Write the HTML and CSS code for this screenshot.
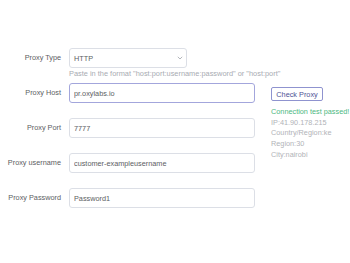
FILE: index.html
```html
<!DOCTYPE html>
<html lang="en">
<head>
    <meta charset="UTF-8">
    <meta name="viewport" content="width=device-width, initial-scale=1.0">
    <title>Proxy Settings</title>
    <link rel="stylesheet" href="styles.css">
</head>
<body>

<div class="page">
    <div class="proxy-form">
        <div class="form-item has-hint">
            <label class="form-label">Proxy Type</label>
            <div class="form-control">
                <div class="select-box">
                    <span>HTTP</span>
                    <svg class="select-arrow" width="6" height="4" viewBox="0 0 6 4">
                        <path d="M0.8 0.8 L3 3 L5.2 0.8" fill="none" stroke="#a0a3aa" stroke-width="0.8"/>
                    </svg>
                </div>
                <div class="form-hint">Paste in the format "host:port:username:password" or "host:port"</div>
            </div>
        </div>

        <div class="form-item">
            <label class="form-label">Proxy Host</label>
            <div class="form-control">
                <input type="text" class="text-input focused" value="pr.oxylabs.io">
            </div>
        </div>

        <div class="form-item">
            <label class="form-label">Proxy Port</label>
            <div class="form-control">
                <input type="text" class="text-input" value="7777">
            </div>
        </div>

        <div class="form-item">
            <label class="form-label">Proxy username</label>
            <div class="form-control">
                <input type="text" class="text-input" value="customer-exampleusername">
            </div>
        </div>

        <div class="form-item">
            <label class="form-label">Proxy Password</label>
            <div class="form-control">
                <input type="text" class="text-input" value="Password1">
            </div>
        </div>
    </div>

    <div class="check-panel">
        <button class="check-btn">Check Proxy</button>
        <div class="check-result">
            <div class="result-ok">Connection test passed!</div>
            <div>IP:41.90.178.215</div>
            <div>Country/Region:ke</div>
            <div>Region:30</div>
            <div>City:nairobi</div>
        </div>
    </div>
</div>

</body>
</html>
```

FILE: styles.css
```css
body {
    margin: 0;
    background-color: #fff;
    font-family: "Liberation Sans", Arial, sans-serif;
    color: #606266;
}

.page {
    display: flex;
    padding-top: 48px;
}

.proxy-form {
    width: 255px;
}

.form-item {
    display: flex;
    margin-bottom: 15px;
}

.form-item.has-hint {
    margin-bottom: 3px;
}

.form-label {
    width: 61px;
    flex-shrink: 0;
    padding-right: 8px;
    text-align: right;
    font-size: 7.3px;
    line-height: 20px;
    color: #5c5e63;
}

.form-control {
    flex: 1;
}

.select-box {
    width: 118px;
    height: 20px;
    box-sizing: border-box;
    border: 1px solid #dcdfe6;
    border-radius: 3px;
    padding: 0 3px 0 4px;
    display: flex;
    align-items: center;
    justify-content: space-between;
    font-size: 7.3px;
    color: #5c5e63;
}

.form-hint {
    font-size: 7.4px;
    line-height: 12px;
    color: #a8abb2;
    white-space: nowrap;
}

.text-input {
    display: block;
    width: 100%;
    height: 20px;
    box-sizing: border-box;
    margin: 0;
    padding: 0 4px;
    border: 1px solid #dcdfe6;
    border-radius: 3px;
    font-family: "Liberation Sans", Arial, sans-serif;
    font-size: 7.3px;
    color: #5c5e63;
    outline: none;
}

.text-input.focused {
    border-color: #a3a6dc;
}

.check-panel {
    padding-top: 39px;
    padding-left: 16px;
}

.check-btn {
    display: block;
    width: 52px;
    height: 14px;
    margin: 0;
    padding: 0;
    background-color: #fff;
    border: 1px solid #8f93cf;
    border-radius: 2px;
    font-family: "Liberation Sans", Arial, sans-serif;
    font-size: 7.3px;
    color: #4f5396;
}

.check-result {
    margin-top: 6px;
    font-size: 7.3px;
    line-height: 10.7px;
    color: #b1b3b8;
    white-space: nowrap;
}

.result-ok {
    color: #4cb87f;
}
```
